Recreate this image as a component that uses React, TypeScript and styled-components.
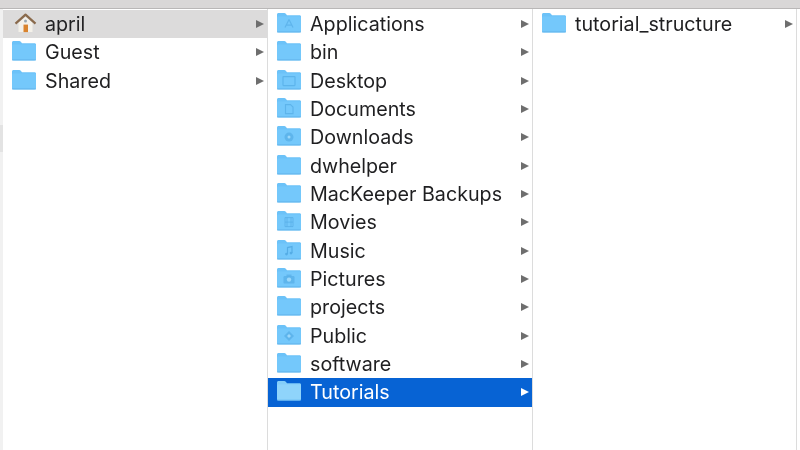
import React from "react";
import styled, { createGlobalStyle } from "styled-components";

const Global = createGlobalStyle`
  html, body { margin: 0; padding: 0; background: #fff; width: 800px; height: 450px; overflow: hidden; }
`;

const Page = styled.div`
  width: 800px;
  height: 450px;
  display: flex;
  flex-direction: column;
  overflow: hidden;
  font-family: Inter, "Liberation Sans", sans-serif;
  background: #fff;
`;

const TopBar = styled.div`
  height: 8px;
  flex: none;
  background: #d9d7d7;
  border-bottom: 1px solid #b9b7b7;
`;

const Browser = styled.div`
  flex: 1;
  display: flex;
  min-height: 0;
  filter: blur(0.35px);
`;

const Gutter = styled.div`
  width: 3px;
  flex: none;
  background: #f1f1f1;
  display: flex;
  flex-direction: column;
  padding-top: 116px;
`;

const GutterMark = styled.div`
  height: 27px;
  background: #e3e3e3;
`;

const Column = styled.div<{ $width: number }>`
  width: ${(p) => p.$width}px;
  flex: none;
  box-sizing: border-box;
  border-right: 1px solid #dcdcdc;
  padding-top: 1px;
  display: flex;
  flex-direction: column;
`;

const Row = styled.div<{ $state?: "active" | "parent" }>`
  height: 28.33px;
  flex: none;
  display: flex;
  align-items: center;
  padding-left: 8px;
  padding-right: 3px;
  gap: 8px;
  font-size: 19.7px;
  color: ${(p) => (p.$state === "active" ? "#fff" : "#1f1f21")};
  background: ${(p) =>
    p.$state === "active" ? "#0763d4" : p.$state === "parent" ? "#dcdbdb" : "transparent"};
`;

const Label = styled.span`
  flex: 1;
  white-space: nowrap;
`;

const Chevron = styled.span<{ $active?: boolean }>`
  width: 0;
  height: 0;
  flex: none;
  border-left: 8px solid ${(p) => (p.$active ? "#fff" : "#6e6e6e")};
  border-top: 4.5px solid transparent;
  border-bottom: 4.5px solid transparent;
`;

const IconBox = styled.svg`
  width: 26px;
  height: 22px;
  flex: none;
`;

type Glyph = "none" | "apps" | "desktop" | "docs" | "down" | "movies" | "music" | "pics" | "public";

const G = "#55ade6";

function GlyphMark({ kind }: { kind: Glyph }) {
  switch (kind) {
    case "apps":
      return <path d="M13 8 L9 16 M13 8 L17 16 M10.5 13.5 H15.5" stroke={G} strokeWidth="1.2" fill="none" opacity="0.7" />;
    case "desktop":
      return <rect x="7" y="8" width="12" height="9" rx="0.5" stroke={G} strokeWidth="1.2" fill="none" opacity="0.75" />;
    case "docs":
      return <path d="M9.5 8 H14.5 L17 10.5 V17 H9.5 Z" stroke={G} strokeWidth="1.1" fill="none" opacity="0.75" />;
    case "down":
      return (
        <>
          <circle cx="13" cy="12.5" r="4.5" fill={G} opacity="0.7" />
          <circle cx="13" cy="12.5" r="1.5" fill="#9bd8fb" />
        </>
      );
    case "movies":
      return <path d="M9 8 H17 V17 H9 Z M9 12.5 H17 M11 8 V17 M15 8 V17" stroke={G} strokeWidth="1" fill="none" opacity="0.7" />;
    case "music":
      return (
        <>
          <path d="M11.5 15.5 V9 L16 8 V14.5" stroke={G} strokeWidth="1.2" fill="none" />
          <circle cx="10.5" cy="15.5" r="1.4" fill={G} />
          <circle cx="15" cy="14.5" r="1.4" fill={G} />
        </>
      );
    case "pics":
      return (
        <>
          <rect x="7.5" y="9.5" width="11" height="7.5" rx="1.2" fill={G} opacity="0.7" />
          <rect x="10.5" y="8" width="5" height="2" fill={G} opacity="0.7" />
          <circle cx="13" cy="13" r="2.2" fill="#9bd8fb" />
        </>
      );
    case "public":
      return (
        <>
          <path d="M13 7.5 L18 12.5 L13 17.5 L8 12.5 Z" fill={G} opacity="0.7" />
          <path d="M13 10.5 L15 12.5 L13 14.5 L11 12.5 Z" fill="#9bd8fb" />
        </>
      );
    default:
      return null;
  }
}

function Folder({ glyph = "none", light }: { glyph?: Glyph; light?: boolean }) {
  return (
    <IconBox viewBox="0 1.4 26 22">
      <path d="M1 3.2 C1 2.2 1.6 1.5 2.6 1.5 H8.2 C9 1.5 9.5 1.8 10 2.4 L11 3.6 H23.5 C24.4 3.6 25 4.2 25 5 V7 H1 Z" fill={light ? "#84cef9" : "#6cc2f8"} />
      <path d="M1 6.2 C1 5.4 1.6 4.8 2.4 4.8 H23.6 C24.4 4.8 25 5.4 25 6.2 V19.5 C25 20.3 24.4 20.8 23.6 20.8 H2.4 C1.6 20.8 1 20.3 1 19.5 Z" fill={light ? "#8fd4fb" : "#74c8fb"} />
      <rect x="1" y="19.8" width="24" height="1" fill={light ? "#78c6f5" : "#62b5ec"} />
      <GlyphMark kind={glyph} />
    </IconBox>
  );
}

function Home() {
  return (
    <IconBox viewBox="-1.5 1.4 26 22">
      <path d="M6 11 L13 5.5 L20 11 V20.5 H6 Z" fill="#f4f1ea" />
      <path d="M3 12 L13 3 L23 12" fill="none" stroke="#8a6a4c" strokeWidth="2.2" strokeLinejoin="round" />
      <rect x="11" y="13" width="4.5" height="7.5" fill="#d9832e" />
      <circle cx="13" cy="9.5" r="1.5" fill="#9aa8b2" />
    </IconBox>
  );
}

const first = ["april", "Guest", "Shared"];
const second: [string, Glyph][] = [
  ["Applications", "apps"],
  ["bin", "none"],
  ["Desktop", "desktop"],
  ["Documents", "docs"],
  ["Downloads", "down"],
  ["dwhelper", "none"],
  ["MacKeeper Backups", "none"],
  ["Movies", "movies"],
  ["Music", "music"],
  ["Pictures", "pics"],
  ["projects", "none"],
  ["Public", "public"],
  ["software", "none"],
  ["Tutorials", "none"],
];

export default function App() {
  return (
    <Page>
      <Global />
      <TopBar />
      <Browser>
        <Gutter>
          <GutterMark />
        </Gutter>
        <Column $width={265}>
          {first.map((name, i) => (
            <Row key={name} $state={i === 0 ? "parent" : undefined}>
              {i === 0 ? <Home /> : <Folder />}
              <Label>{name}</Label>
              <Chevron />
            </Row>
          ))}
        </Column>
        <Column $width={265}>
          {second.map(([name, glyph]) => (
            <Row key={name} $state={name === "Tutorials" ? "active" : undefined}>
              <Folder glyph={glyph} light={name === "Tutorials"} />
              <Label>{name}</Label>
              <Chevron $active={name === "Tutorials"} />
            </Row>
          ))}
        </Column>
        <Column $width={264}>
          <Row>
            <Folder />
            <Label>tutorial_structure</Label>
            <Chevron />
          </Row>
        </Column>
      </Browser>
    </Page>
  );
}
